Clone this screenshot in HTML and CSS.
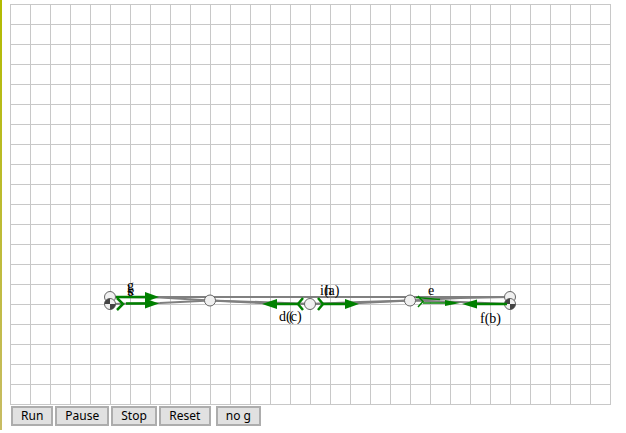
FILE: index.html
```html
<!DOCTYPE html>
<html lang="en">
<head>
    <meta charset="UTF-8">
    <title>Graph Simulation</title>
    <link rel="stylesheet" href="styles.css">
</head>
<body>
    <div class="stripe"></div>
    <div class="container">
        <!-- simulation canvas -->
        <div class="board">
            <svg class="graph" width="601" height="401" viewBox="10 4 601 401">
                <g class="edges">
                    <path d="M110 297 L510 297"/>
                    <path d="M110 297 L160 297.5 L210 300.5 L260 303 L310 304 L360 303 L410 300.5 L460 298 L510 297"/>
                    <path d="M110 304 L160 303 L210 300.5 L260 302 L310 304 L360 302 L410 300.5 L460 302 L510 304"/>
                </g>

                <g class="nodes">
                    <circle cx="110" cy="297" r="5.5"/>
                    <circle cx="210" cy="300.5" r="5.5"/>
                    <circle cx="310" cy="304" r="5.5"/>
                    <circle cx="410" cy="300.5" r="5.5"/>
                    <circle cx="510" cy="297" r="5.5"/>
                    <circle cx="110" cy="304" r="5.5"/>
                    <circle cx="510" cy="304" r="5.5"/>
                </g>
                <g class="quarters">
                    <path d="M110 304 L110 298.5 A5.5 5.5 0 0 0 104.5 304 Z"/>
                    <path d="M110 304 L110 309.5 A5.5 5.5 0 0 0 115.5 304 Z"/>
                    <path d="M510 304 L510 298.5 A5.5 5.5 0 0 0 504.5 304 Z"/>
                    <path d="M510 304 L510 309.5 A5.5 5.5 0 0 0 515.5 304 Z"/>
                </g>

                <g class="arrows">
                    <path d="M116 297 L146 297"/>
                    <path d="M126 303.5 L146 303.5"/>
                    <path d="M117 298 L123 304 L117 310"/>
                    <path d="M276 304 L298 304"/>
                    <path d="M303 298 L298 304 L303 310"/>
                    <path d="M318 298 L323 304 L318 310"/>
                    <path d="M323 304 L346 304"/>
                    <path d="M477 304 L507 304"/>
                </g>
                <g class="arrows thin">
                    <path d="M423 303 L446 303"/>
                    <path d="M418 296 L423 301.5 L418 307"/>
                    <path d="M416 297.5 L440 299.5"/>
                </g>
                <g class="heads">
                    <polygon points="159,297 145,292 145,302"/>
                    <polygon points="159,303.5 145,298.5 145,308.5"/>
                    <polygon points="262,304 277,299 277,309"/>
                    <polygon points="359,304 345,299 345,309"/>
                    <polygon points="460,303 445,300 445,306"/>
                    <polygon points="462,304 477,299.5 477,308.5"/>
                </g>

                <g class="labels">
                    <text x="127" y="290">g</text>
                    <text x="127" y="295">k</text>
                    <text x="128" y="296">s</text>
                    <text x="320" y="295">i(a)</text>
                    <text x="325" y="295">h</text>
                    <text x="428" y="295">e</text>
                    <text x="279" y="321">d(c)</text>
                    <text x="289" y="321">(</text>
                    <text x="480" y="323">f(b)</text>
                </g>
            </svg>
        </div>

        <div class="controls">
            <button type="button">Run</button>
            <button type="button">Pause</button>
            <button type="button">Stop</button>
            <button type="button" class="reset">Reset</button>
            <button type="button" class="toggle">no g</button>
        </div>
    </div>
</body>
</html>
```

FILE: styles.css
```css
html, body {
    margin: 0;
    padding: 0;
    background-color: #fff;
}

body {
    display: flex;
    align-items: flex-start;
    height: 433px;
    overflow: hidden;
}

.stripe {
    width: 2px;
    height: 430px;
    background: linear-gradient(#b2bb00, #c8bc64);
}

.container {
    margin-left: 8px;
    padding-top: 4px;
}

.board {
    width: 601px;
    height: 401px;
    background-image:
        linear-gradient(#c8c8c8 1px, transparent 1px),
        linear-gradient(90deg, #c8c8c8 1px, transparent 1px);
    background-size: 20px 20px;
}

.graph {
    display: block;
}

.edges path {
    fill: none;
    stroke: #808080;
    stroke-width: 2;
}

.nodes circle {
    fill: #f0f0f0;
    stroke: #666;
    stroke-width: 1;
}

.quarters path {
    fill: #444;
}

.arrows path {
    fill: none;
    stroke: #008000;
    stroke-width: 2.5;
}

.arrows.thin path {
    stroke-width: 1.5;
}

.heads polygon {
    fill: #008000;
}

.labels text {
    font-family: "Liberation Serif", serif;
    font-size: 14px;
    fill: #000;
}

.controls {
    display: flex;
    gap: 2px;
    margin-top: 1px;
    margin-left: 1px;
}

.controls button {
    height: 20px;
    padding: 0 8px;
    background-color: #e1e1e1;
    border: 2px solid #adadad;
    font-family: "Noto Sans", sans-serif;
    font-size: 12px;
    line-height: 14px;
    color: #000;
}

.controls .reset {
    min-width: 52px;
}

.controls .toggle {
    margin-left: 3px;
}
```
